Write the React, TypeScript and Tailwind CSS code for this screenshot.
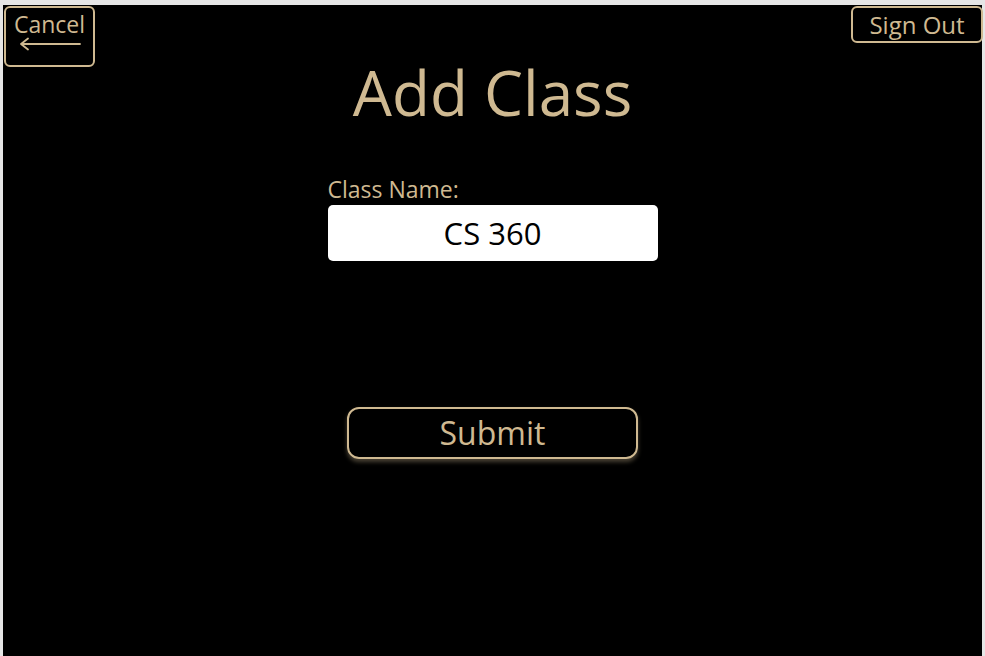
import React from "react";

export default function App() {
  return (
    <div className="w-[985px] h-[656px] bg-[#e6e6e6] pt-[5px] px-[3px] flex flex-col" style={{ fontFamily: '"Open Sans", "Noto Sans", sans-serif' }}>
      <div className="flex-1 bg-black flex flex-col text-[#cfb991]">
        <div className="flex justify-between items-start pl-[1px] -mr-[1px] pt-[1px]">
          <button className="w-[91px] h-[61px] border-2 border-[#cfb991] rounded-[6px] flex flex-col items-center pt-[2px] leading-none">
            <span className="text-[23px] leading-[28px]">Cancel</span>
            <svg width="64" height="14" viewBox="0 0 64 14" className="-mt-[1px]">
              <path d="M3 7 H62 M3 7 L10 1.5 M3 7 L10 12.5" stroke="#cfb991" strokeWidth="1.8" fill="none" strokeLinecap="round" />
            </svg>
          </button>
          <button className="w-[132px] h-[37px] border-2 border-[#cfb991] rounded-[6px] flex items-center justify-center text-[24px] leading-none">
            Sign Out
          </button>
        </div>
        <h1 className="text-center text-[62px] leading-[72px] -mt-[11px]">Add Class</h1>
        <div className="flex flex-col items-start mx-auto w-[330px] mt-[47px]">
          <label className="text-[23px] leading-[28px]">Class Name:</label>
          <div className="w-[330px] h-[56px] bg-white rounded-[5px] flex items-center justify-center text-black text-[31px] mt-[2px]">
            CS 360
          </div>
        </div>
        <div className="flex justify-center mt-[146px]">
          <button className="w-[291px] h-[52px] border-2 border-[#cfb991] rounded-[12px] text-[32px] leading-none flex items-center justify-center shadow-[0_3px_4px_rgba(207,185,145,0.35)]">
            Submit
          </button>
        </div>
      </div>
    </div>
  );
}
